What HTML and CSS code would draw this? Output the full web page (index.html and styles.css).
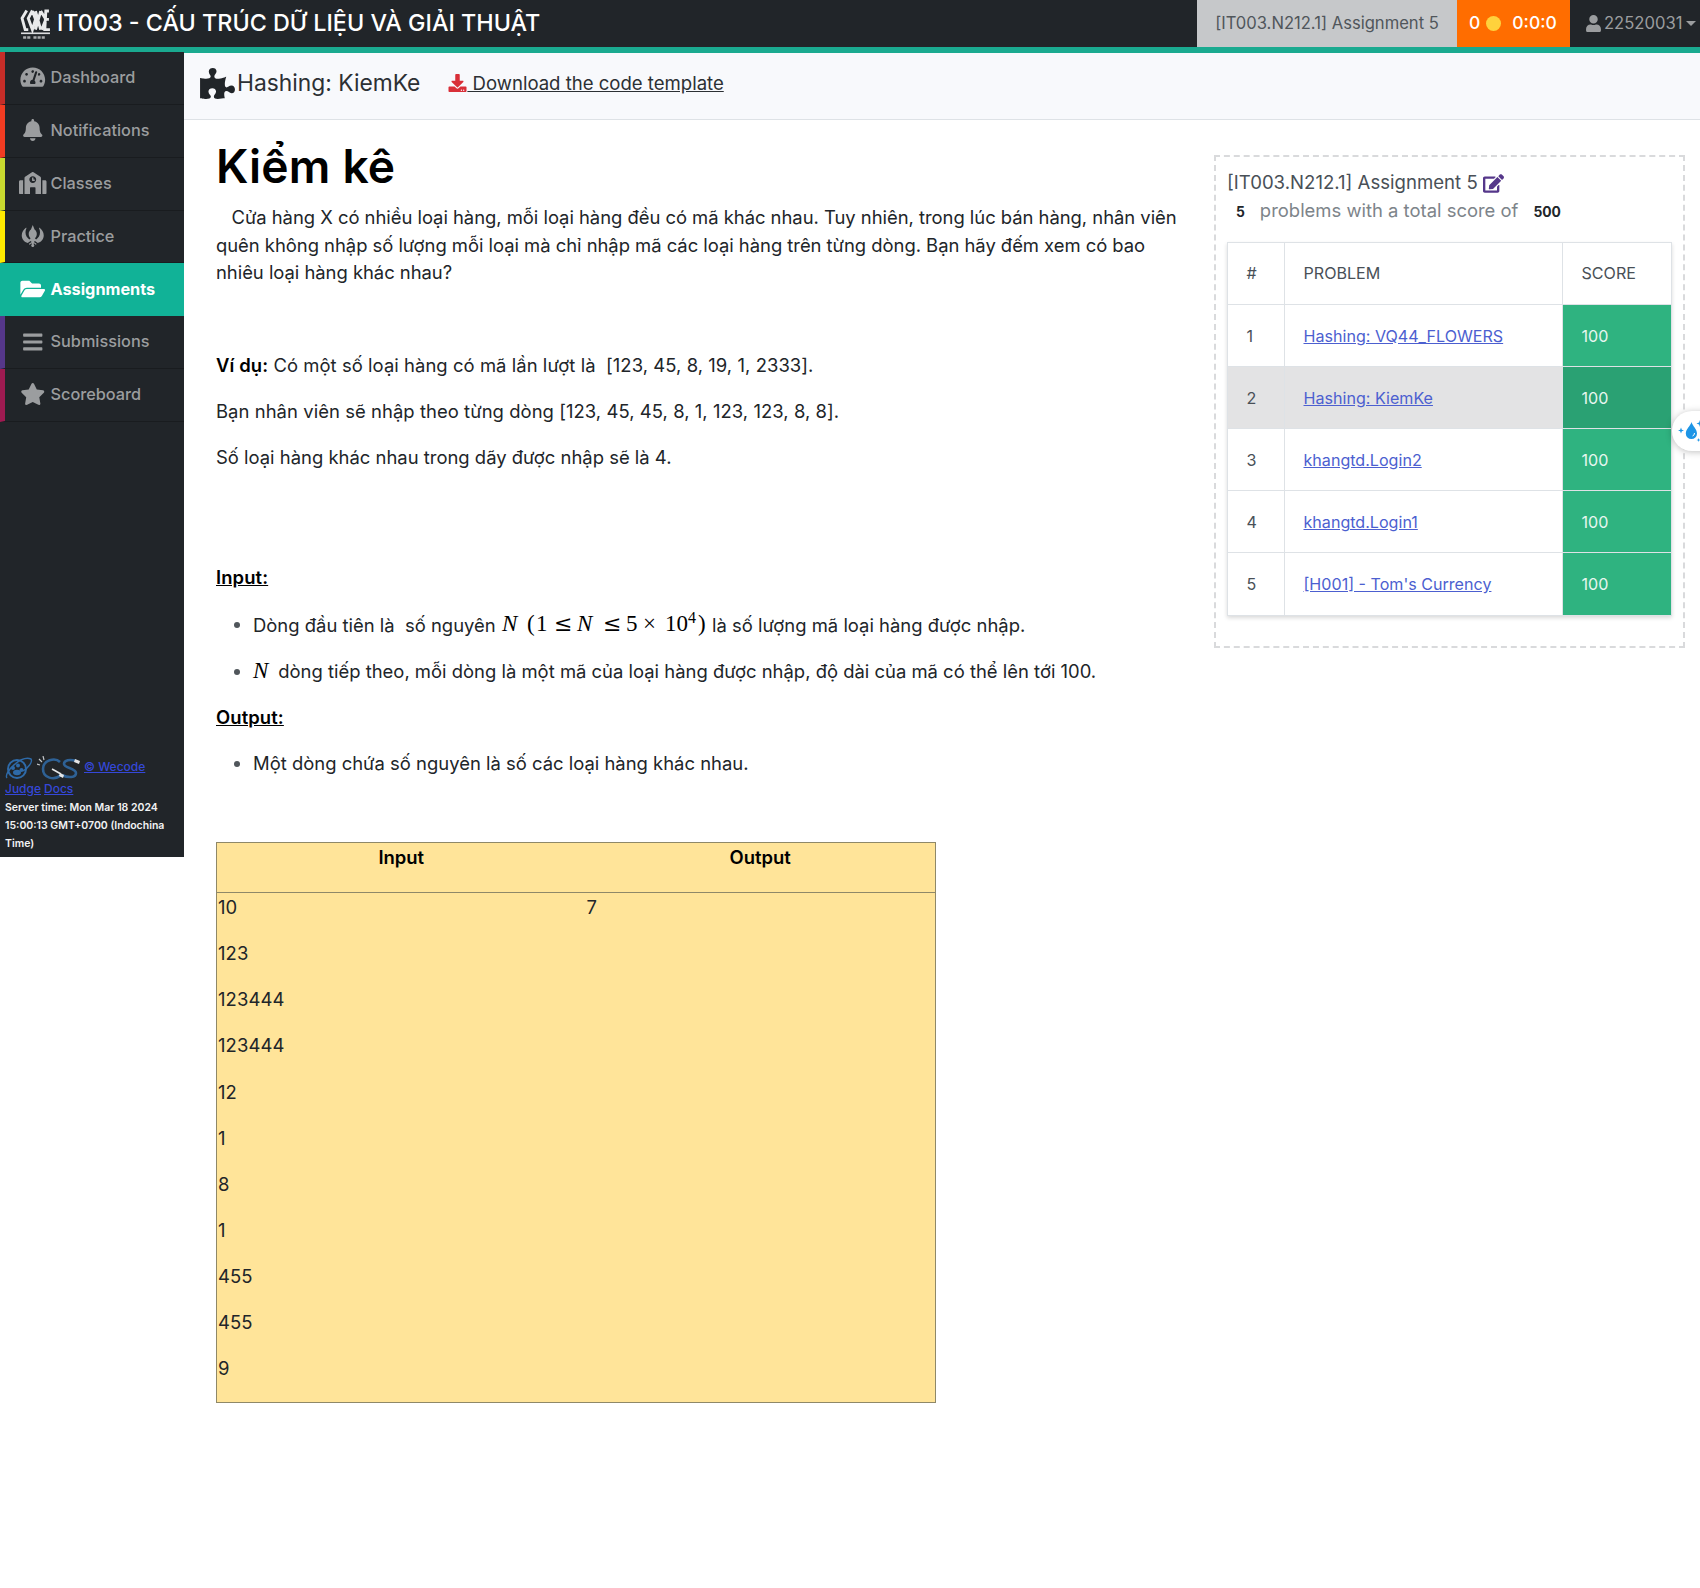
FILE: index.html
```
<!DOCTYPE html>
<html lang="vi">
<head>
<meta charset="utf-8">
<title>Hashing: KiemKe</title>
<link rel="stylesheet" href="styles.css">
</head>
<body>
<header class="topbar">
  <a class="brand">
    <svg class="brand-logo" viewBox="0 0 30 30"><g fill="none" stroke="#e9eaeb" stroke-width="2.800"><path d="M6.500 1.500L2 9l3 11h3M12 1.500L8 9l4 11 3-10-3-8M15 2l5 18M20 2l-5 18M20 2l5 8-4 10M28 2h-3l-1 18h5M24 10h4"/></g><path d="M1 23.500h28" stroke="#dcdddf" stroke-width="1.600"/><path d="M3 27.500h24" stroke="#a9abad" stroke-width="2.400" stroke-dasharray="3 1 3 3 3 1"/></svg>
    <span class="brand-text">IT003 - CẤU TRÚC DỮ LIỆU VÀ GIẢI THUẬT</span>
  </a>
  <div class="top-assignment"><span>[IT003.N212.1] Assignment 5</span></div>
  <div class="top-timer"><span>0</span><i class="coin"></i><span class="clock">0:0:0</span></div>
  <div class="top-user">
    <svg class="user-icon" viewBox="0 0 448 512"><path d="M224 256c70.7 0 128-57.3 128-128S294.700 0 224 0 96 57.300 96 128s57.300 128 128 128zm89.600 32h-16.700c-22.200 10.200-46.900 16-72.900 16s-50.600-5.800-72.900-16h-16.700C60.200 288 0 348.200 0 422.400V464c0 26.500 21.500 48 48 48h352c26.500 0 48-21.500 48-48v-41.600c0-74.200-60.200-134.400-134.400-134.400z"/></svg><span>22520031</span><i class="caret"></i>
  </div>
</header>
<div class="shell">
  <aside class="sidebar">
    <nav class="menu">
      <a class="item c-dashboard"><svg viewBox="0 0 576 512"><path d="M288 32C128.940 32 0 160.940 0 320c0 52.800 14.250 102.260 39.060 144.800 5.610 9.620 16.300 15.200 27.440 15.200h443c11.140 0 21.830-5.580 27.440-15.200C561.750 422.260 576 372.800 576 320c0-159.060-128.940-288-288-288zm0 64c14.710 0 26.580 10.130 30.320 23.650-1.110 2.260-2.640 4.230-3.450 6.670l-9.220 27.670c-5.130 3.490-10.970 6.010-17.640 6.010-17.670 0-32-14.330-32-32S270.330 96 288 96zM96 384c-17.670 0-32-14.330-32-32s14.330-32 32-32 32 14.330 32 32-14.330 32-32 32zm48-160c-17.670 0-32-14.330-32-32s14.330-32 32-32 32 14.330 32 32-14.330 32-32 32zm246.770-72.410l-61.330 184C343.130 347.330 352 364.540 352 384c0 11.720-3.380 22.550-8.880 32H232.880c-5.500-9.450-8.880-20.280-8.880-32 0-33.940 26.500-61.430 59.900-63.590l61.340-184.010c4.170-12.560 17.730-19.450 30.360-15.170 12.570 4.190 19.350 17.790 15.170 30.360zm14.660 57.200l15.520-46.550c3.470-1.290 7.130-2.230 11.050-2.230 17.670 0 32 14.330 32 32s-14.330 32-32 32c-11.380-.010-20.890-6.280-26.570-15.220zM480 384c-17.670 0-32-14.330-32-32s14.330-32 32-32 32 14.330 32 32-14.330 32-32 32z"/></svg><span>Dashboard</span></a>
      <a class="item c-notifications"><svg viewBox="0 0 448 512"><path d="M224 512c35.320 0 63.970-28.650 63.970-64H160.030c0 35.350 28.650 64 63.970 64zm215.390-149.710c-19.320-20.760-55.470-51.990-55.470-154.290 0-77.700-54.480-139.900-127.940-155.160V32c0-17.670-14.320-32-31.980-32s-31.980 14.330-31.980 32v20.840C118.560 68.100 64.080 130.300 64.080 208c0 102.300-36.150 133.530-55.470 154.290-6 6.450-8.660 14.160-8.610 21.710.110 16.400 12.980 32 32.100 32h383.800c19.120 0 32-15.600 32.100-32 .050-7.550-2.610-15.270-8.610-21.710z"/></svg><span>Notifications</span></a>
      <a class="item c-classes"><svg viewBox="0 0 640 512"><path d="M0 224v272c0 8.840 7.160 16 16 16h80V192H32c-17.670 0-32 14.330-32 32zm360-48h-24v-40c0-4.420-3.580-8-8-8h-16c-4.420 0-8 3.580-8 8v64c0 4.420 3.580 8 8 8h48c4.420 0 8-3.580 8-8v-16c0-4.420-3.580-8-8-8zm137.750-63.960l-160-106.670a32.020 32.020 0 0 0-35.500 0l-160 106.670A32.002 32.002 0 0 0 128 138.660V512h128V368c0-8.840 7.160-16 16-16h96c8.840 0 16 7.160 16 16v144h128V138.670c0-10.700-5.350-20.690-14.250-26.630zM320 256c-44.180 0-80-35.820-80-80s35.820-80 80-80 80 35.820 80 80-35.820 80-80 80zm288-64h-64v320h80c8.840 0 16-7.160 16-16V224c0-17.670-14.330-32-32-32z"/></svg><span>Classes</span></a>
      <a class="item c-practice"><svg viewBox="0 0 512 512"><path d="M415 66c-6-5-15-1-12 7 14 28 22 60 22 94 0 70-36 132-90 168l-30-25c27-23 45-60 45-100 0-42-20-80-52-103L256 0l-42 107c-32 23-52 61-52 103 0 40 18 77 45 100l-30 25c-54-36-90-98-90-168 0-34 8-66 22-94 3-8-6-12-12-7C45 110 0 168 0 240c0 90 60 162 140 178l65-45 25 20-55 40c-10 8-5 25 8 25 10 0 16-6 20-14l30-20v27c-8 5-14 13-14 24 0 20 16 37 37 37s37-17 37-37c0-11-6-19-14-24v-27l30 20c4 8 10 14 20 14 13 0 18-17 8-25l-55-40 25-20 65 45c80-16 140-88 140-178 0-72-45-130-97-174zM226 165c-22 26-22 64 0 90zm60 0v90c22-26 22-64 0-90z"/></svg><span>Practice</span></a>
      <a class="item active"><svg viewBox="0 0 576 512"><path d="M572.694 292.093L500.270 416.248A63.997 63.997 0 0 1 444.989 448H45.025c-18.523 0-30.064-20.093-20.731-36.093l72.424-124.155A64 64 0 0 1 152 256h399.964c18.523 0 30.064 20.093 20.730 36.093zM152 224h328v-48c0-26.510-21.490-48-48-48H272l-64-64H48C21.490 64 0 85.490 0 112v278.046l69.077-118.418C86.214 242.250 117.989 224 152 224z"/></svg><span>Assignments</span></a>
      <a class="item c-submissions"><svg viewBox="0 0 448 512"><path d="M16 60h416q16 0 16 16v40q0 16-16 16H16q-16 0-16-16V76q0-16 16-16zm0 160h416q16 0 16 16v40q0 16-16 16H16q-16 0-16-16v-40q0-16 16-16zm0 160h416q16 0 16 16v40q0 16-16 16H16q-16 0-16-16v-40q0-16 16-16z"/></svg><span>Submissions</span></a>
      <a class="item c-scoreboard"><svg viewBox="0 0 576 512"><path d="M259.300 17.800L194 150.200 47.900 171.500c-26.200 3.800-36.700 36.100-17.700 54.600l105.700 103-25 145.500c-4.500 26.300 23.200 46 46.400 33.700L288 439.600l130.700 68.700c23.200 12.200 50.900-7.400 46.400-33.700l-25-145.500 105.700-103c19-18.500 8.500-50.800-17.700-54.600L382 150.200 316.700 17.800c-11.700-23.600-45.600-23.900-57.400 0z"/></svg><span>Scoreboard</span></a>
    </nav>
    <footer class="side-footer">
      <div class="credits">
        <svg class="planet" viewBox="0 0 28 24"><g fill="none" stroke="#2e6aa8" stroke-width="2"><circle cx="12" cy="13" r="9"/><path d="M2 22C-2 17 16-1 26 3c2 3-3 9-8 12" stroke-width="1.400"/></g><g fill="#2e6aa8"><circle cx="8" cy="12" r="2"/><circle cx="13" cy="9.500" r="2"/><circle cx="16.500" cy="14" r="2"/><ellipse cx="12" cy="16.500" rx="4" ry="2.800"/></g></svg>
        <svg class="cs" viewBox="0 0 44 24"><g fill="none" stroke="#2e6195" stroke-width="2.600"><path d="M23 6C18 1 6 4 6 13s11 12 18 6M39 5c-6-2-12-1-12 3s12 4 12 9-8 5-14 2"/></g><g stroke="#c3c7ca" stroke-width="1.200"><path d="M0 8l3 1M2 3l3 3M6 0l1 4"/><path d="M15 13l9 5" stroke="#e3e6e8" stroke-width="1.600"/></g><path d="M38 3l5 2-1 3-5-2zM23 17l4 2-1 3-4-2z" fill="#e5e5e5"/></svg>
        <a>© Wecode</a>
      </div>
      <div class="credits second"><a>Judge</a> <a>Docs</a></div>
      <div class="server-time">Server time: Mon Mar 18 2024<br>15:00:13 GMT+0700 (Indochina<br>Time)</div>
    </footer>
  </aside>
  <main class="page">
    <div class="page-head">
      <svg class="puzzle" viewBox="0 0 576 512"><path d="M519.442 288.651c-41.519 0-59.500 31.593-82.058 31.593C377.409 320.244 432 144 432 144s-196.288 80-196.288-3.297c0-35.827 36.288-46.250 36.288-85.985C272 19.216 243.885 0 210.539 0c-34.654 0-66.366 18.891-66.366 56.346 0 41.364 31.711 59.277 31.711 81.750C175.885 207.719 0 166.758 0 166.758v333.237s178.635 41.047 178.635-28.662c0-22.473-40-40.107-40-81.471 0-37.456 29.250-56.346 63.577-56.346 33.673 0 61.788 19.216 61.788 54.717 0 39.735-36.288 50.158-36.288 85.985 0 60.803 129.675 25.730 181.230 25.730 0 0-34.725-120.101 25.827-120.101 35.962 0 46.423 36.152 86.308 36.152C556.712 416 576 387.990 576 354.443c0-34.199-18.962-65.792-56.558-65.792z"/></svg>
      <span class="page-title">Hashing: KiemKe</span>
      <svg class="download" viewBox="0 0 512 512"><path d="M216 0h80c13.300 0 24 10.700 24 24v168h87.700c17.800 0 26.700 21.500 14.100 34.100L269.700 378.300c-7.500 7.500-19.800 7.500-27.300 0L90.100 226.100c-12.600-12.600-3.700-34.100 14.100-34.100H192V24c0-13.300 10.700-24 24-24zm296 376v112c0 13.300-10.700 24-24 24H24c-13.300 0-24-10.700-24-24V376c0-13.300 10.700-24 24-24h146.700l49 49c20.100 20.100 52.500 20.100 72.600 0l49-49H488c13.300 0 24 10.700 24 24zm-124 88c0-11-9-20-20-20s-20 9-20 20 9 20 20 20 20-9 20-20zm64 0c0-11-9-20-20-20s-20 9-20 20 9 20 20 20 20-9 20-20z"/></svg>
      <a class="template-link">&nbsp;Download the code template</a>
    </div>
    <div class="columns">
      <article class="problem">
        <h1>Kiểm kê</h1>
        <p class="intro">&nbsp; &nbsp;Cửa hàng X có nhiều loại hàng, mỗi loại hàng đều có mã khác nhau. Tuy nhiên, trong lúc bán hàng, nhân viên<br>quên không nhập số lượng mỗi loại mà chỉ nhập mã các loại hàng trên từng dòng. Bạn hãy đếm xem có bao<br>nhiêu loại hàng khác nhau?</p>
        <p>&nbsp;</p>
        <p class="example"><strong>Ví dụ:</strong> Có một số loại hàng có mã lần lượt là&nbsp; [123, 45, 8, 19, 1, 2333].</p>
        <p class="example">Bạn nhân viên sẽ nhập theo từng dòng [123, 45, 45, 8, 1, 123, 123, 8, 8].</p>
        <p>Số loại hàng khác nhau trong dãy được nhập sẽ là 4.</p>
        <p>&nbsp;<br>&nbsp;</p>
        <p><strong><u>Input:</u></strong></p>
        <ul>
          <li>Dòng đầu tiên là&nbsp; số nguyên <span class="math"><i class="m-n">N</i><b class="m-open">(</b><b class="m-one">1</b><b class="m-rel">≤</b><i class="m-n2">N</i><b class="m-rel">≤</b><b class="m-five">5</b><b class="m-times">×</b><b class="m-ten">10</b><sup>4</sup><b class="m-close">)</b></span> là số lượng mã loại hàng được nhập.</li>
          <li><span class="math"><i class="m-solo">N</i></span> dòng tiếp theo, mỗi dòng là một mã của loại hàng được nhập, độ dài của mã có thể lên tới 100.</li>
        </ul>
        <p><strong><u>Output:</u></strong></p>
        <ul class="last">
          <li>Một dòng chứa số nguyên là số các loại hàng khác nhau.</li>
        </ul>
        <table class="sample">
          <thead><tr><th>Input</th><th>Output</th></tr></thead>
          <tbody><tr>
            <td><p>10</p><p>123</p><p>123444</p><p>123444</p><p>12</p><p>1</p><p>8</p><p>1</p><p>455</p><p>455</p><p>9</p></td>
            <td><p>7</p></td>
          </tr></tbody>
        </table>
      </article>
      <section class="card">
        <div class="card-title"><span>[IT003.N212.1] Assignment 5</span><svg class="edit" viewBox="0 0 576 512"><path d="M402.600 83.200l90.200 90.200c3.800 3.800 3.800 10 0 13.800L274.400 405.600l-92.800 10.300c-12.400 1.400-22.900-9.100-21.500-21.500l10.300-92.800L388.800 83.200c3.800-3.800 10-3.800 13.800 0zm162-22.900l-48.800-48.800c-15.200-15.200-39.900-15.200-55.200 0l-35.400 35.400c-3.800 3.800-3.800 10 0 13.800l90.200 90.200c3.800 3.800 10 3.800 13.800 0l35.400-35.400c15.200-15.300 15.200-40 0-55.200zM384 346.200V448H64V128h229.800c3.200 0 6.200-1.300 8.500-3.500l40-40c7.600-7.600 2.200-20.500-8.500-20.500H48C21.500 64 0 85.500 0 112v352c0 26.500 21.500 48 48 48h352c26.500 0 48-21.500 48-48V306.200c0-10.700-12.900-16-20.500-8.500l-40 40c-2.200 2.300-3.500 5.300-3.500 8.500z"/></svg></div>
        <div class="card-sub"><b>5</b><span>problems with a total score of</span><b>500</b></div>
        <table class="scores">
          <thead><tr><th>#</th><th>PROBLEM</th><th>SCORE</th></tr></thead>
          <tbody>
            <tr><td>1</td><td><a>Hashing: VQ44_FLOWERS</a></td><td class="score">100</td></tr>
            <tr class="current"><td>2</td><td><a>Hashing: KiemKe</a></td><td class="score">100</td></tr>
            <tr><td>3</td><td><a>khangtd.Login2</a></td><td class="score">100</td></tr>
            <tr><td>4</td><td><a>khangtd.Login1</a></td><td class="score">100</td></tr>
            <tr><td>5</td><td><a>[H001] - Tom's Currency</a></td><td class="score">100</td></tr>
          </tbody>
        </table>
      </section>
    </div>
  </main>
</div>
<div class="drop-button">
  <svg viewBox="0 0 24 24"><g fill="#1d95e6"><path d="M13.500 3c1 4 5.500 7 5.500 11.500a5.600 5.600 0 0 1-11.200 0C7.800 10 12.500 7 13.500 3z"/><path d="M3 8.500l.8 2.200 2.200.8-2.200.8L3 14.500l-.8-2.200L0 11.500l2.200-.8zM22 1l.9 2.600L25.500 4.500l-2.600.9L22 8l-.9-2.600-2.600-.9 2.600-.9zM20.500 19l.5 1.500 1.500.5-1.500.5-.5 1.500-.5-1.500-1.500-.5 1.500-.5z"/></g><path d="M16.500 14a3 3 0 0 1-2 3" stroke="#fff" fill="none" stroke-width="1"/></svg>
</div>
</body>
</html>
```
FILE: styles.css
```
* { box-sizing: border-box; }
html { font-size: 18.46px; }
body {
  margin: 0;
  height: 1588px;
  overflow: hidden;
  position: relative;
  background: #fff;
  color: #212529;
  font-family: Inter, "Noto Sans", sans-serif;
  line-height: 1.5;
}
svg { display: block; flex: none; }

/* Top bar */
.topbar { display: flex; height: 53px; border-bottom: 6px solid #1aaa90; background: #212529; }
.brand { flex: 1; display: flex; align-items: center; padding: 0 0 2px 20px; gap: 6px; }
.brand-logo { width: 31px; height: 31px; margin-top: 4px; }
.brand-text { color: #fff; font-size: 23.350px; font-weight: 500; white-space: nowrap; }
.top-assignment, .top-timer, .top-user { display: flex; align-items: center; white-space: nowrap; }
.top-assignment { width: 260px; justify-content: center; padding-bottom: 1px; background: #c6c8ca; color: #50565b; font-size: 16.600px; }
.top-timer { width: 113px; padding: 0 0 1px 12px; background: #ff6d00; color: #fff; font-weight: 500; font-size: 17.500px; }
.coin { width: 15px; height: 15px; margin: 0 11px 0 6px; border-radius: 50%; background: #ffd23c; }
.top-user { width: 130px; padding: 0 0 1px 16px; color: #9b9d9f; font-size: 16.600px; }
.user-icon { width: 15px; height: 17px; margin-right: 3px; fill: #9b9d9f; }
.caret { margin-left: 4px; border: 5px solid transparent; border-top-color: #9b9d9f; border-bottom: 0; }

/* Sidebar */
.shell { display: flex; align-items: flex-start; }
.sidebar { display: flex; flex-direction: column; justify-content: space-between; width: 184px; height: 805px; margin-top: -1px; background: #212529; }
.menu { display: flex; flex-direction: column; }
.item { display: flex; align-items: center; height: 52.850px; padding-bottom: 1px; border-left: 5px solid; border-bottom: 1px solid #191c1f; color: #9b9d9f; font-weight: 500; font-size: 16.300px; }
.item svg { width: 45.500px; height: 22px; padding-left: 10px; fill: #9b9d9f; }
.item span { color: #9b9d9f; }
.item.active { background: #11b297; border-color: #11b297; font-weight: 700; }
.item.active span { color: #fff; }
.item.active svg { fill: #fff; }
.c-dashboard { border-left-color: #c62d28; }
.c-notifications { border-left-color: #f23c22; }
.c-classes { border-left-color: #c8d92f; }
.c-practice { border-left-color: #ffea00; }
.c-submissions { border-left-color: #55378a; }
.c-scoreboard { border-left-color: #9e1b51; }
.side-footer { padding: 0 4px 4px 5px; }
.credits { display: flex; align-items: center; height: 25px; color: #2c49e0; font-size: 12px; font-weight: 500; }
.credits.second { height: 19px; gap: 3px; padding-bottom: 2px; }
.credits a { margin-top: -2px; color: #3548d9; text-decoration: underline; }
.credits.second a { margin-top: 0; }
.planet { width: 28px; height: 24px; }
.cs { width: 44px; height: 24px; margin: 0 3px 0 4px; }
.server-time { color: #f1f2f3; font-size: 10.500px; font-weight: 600; line-height: 18px; white-space: nowrap; }

/* Page head */
.page { flex: 1; }
.page-head { display: flex; align-items: center; height: 67px; padding: 0 0 6px 16px; border-bottom: 1px solid #dee2e6; background: #f8f9fc; }
.puzzle { width: 35px; height: 31px; margin-right: 2px; fill: #212529; }
.page-title { font-size: 22.800px; white-space: nowrap; color: #2c3034; }
.download { width: 19px; height: 18px; margin-left: 28px; fill: #d92f38; }
.template-link { padding-top: 1px; text-decoration: underline; font-size: 18.560px; white-space: pre; color: #2c3034; }

/* Problem statement */
.columns { display: flex; align-items: flex-start; }
.problem { width: 1030px; padding: 19px 0 0 32px; color: #212529; white-space: nowrap; }
.problem h1 { margin: 0 0 9.500px; color: #000; font-size: 46.150px; line-height: 55.400px; font-weight: 600; letter-spacing: .2px; }
.problem p { margin: 0 0 1rem; }
.problem .intro { letter-spacing: -.035px; }
.problem .example { letter-spacing: .055px; }
.problem strong { font-weight: 600; color: #000; letter-spacing: .1px; }
.problem ul { margin: 0 0 1rem; padding-left: 37px; }
.problem li { margin-bottom: 1rem; }
.problem li::marker { color: #50565b; }
.problem ul.last { margin-bottom: 64.500px; }
.math { font-family: "Liberation Serif", "Times New Roman", serif; font-size: 23px; line-height: 20px; color: #000; }
.math b, .math i, .math sup { display: inline-block; font-weight: 400; }
.math sup { width: 10px; font-size: 16px; line-height: 1; }
.m-n, .m-solo { width: 20px; }
.m-n { margin: 0 5px 0 1px; }
.m-open { width: 9px; }
.m-one { width: 18px; }
.m-rel { width: 23px; font-family: "DejaVu Serif", serif; font-size: 22px; line-height: 18px; }
.m-n2 { width: 26px; }
.m-five { width: 17px; }
.m-times { width: 22px; }
.m-ten { width: 23px; }
.m-close { width: 9px; }

/* Sample table */
.sample { width: 720px; border: 1px solid #8f8868; border-collapse: collapse; background: #ffe499; }
.sample th, .sample td { padding: 1px; vertical-align: top; text-align: left; }
.sample th { height: 50px; text-align: center; font-weight: 600; color: #000; }
.sample th:first-child { width: 369px; }
.sample tbody { border-top: 1px solid #8f8868; letter-spacing: .1px; }

/* Assignment card */
.card { width: 471px; height: 493px; margin-top: 35px; padding: 12px 11px; border: 2px dashed #d9dadc; }
.card-title { display: flex; align-items: center; height: 28px; color: #495057; font-size: 18.600px; white-space: nowrap; }
.edit { width: 21px; height: 19px; margin-left: 5px; fill: #55378a; }
.card-sub { display: flex; align-items: center; height: 28px; padding-left: 9px; color: #7d848a; font-size: 18.460px; white-space: nowrap; }
.card-sub b { color: #212529; font-size: 13.850px; font-weight: 700; margin-top: 2px; }
.card-sub span { margin: 0 15px; }
.scores { width: 445px; margin-top: 17px; border-collapse: collapse; color: #495057; font-size: 16.100px; box-shadow: 0 2px 4px rgba(0,0,0,.15); }
.scores th, .scores td { height: 62.100px; padding: 0 18.500px; border: 1px solid #dee2e6; text-align: left; font-weight: 400; white-space: nowrap; }
.scores th:first-child { width: 57px; }
.scores th:last-child { width: 109px; }
.scores a { color: #4c5fd0; text-decoration: underline; }
.scores .score { background: #2fb380; color: #e6f6ef; }
.scores .current td { background: #e3e3e4; }
.scores .current .score { background: #2aa173; }

/* Floating helper */
.drop-button { position: absolute; left: 1672px; top: 411px; width: 60px; height: 40px; padding: 8px 0 0 6px; border-radius: 20px; background: #fff; box-shadow: 0 1px 7px rgba(0,0,0,.25); }
.drop-button svg { width: 24px; height: 24px; overflow: visible; }
```
